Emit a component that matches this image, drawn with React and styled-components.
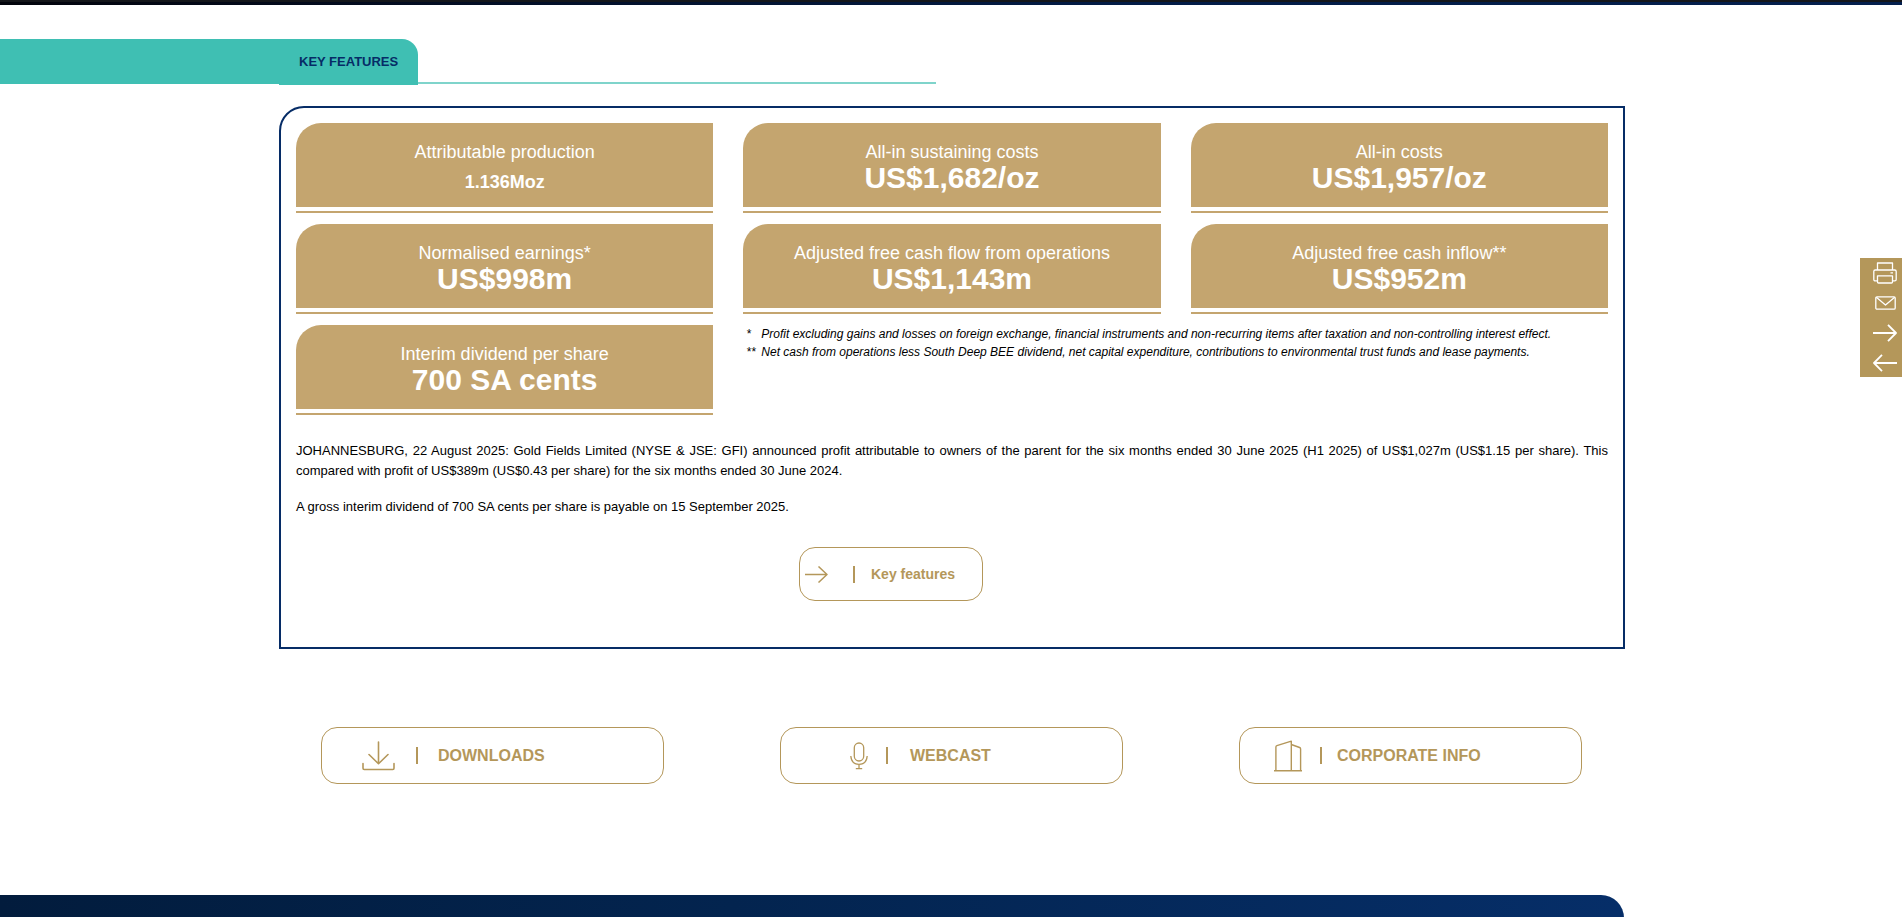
import React from "react";
import styled, { createGlobalStyle } from "styled-components";

const navy = "#062c66";
const gold = "#b4975a";
const tan = "#c4a56f";
const teal = "#3fbfb3";

const GlobalStyle = createGlobalStyle`
  *, *::before, *::after { box-sizing: border-box; }
  body {
    margin: 0;
    background: #fff;
    color: #000;
    font-family: "Liberation Sans", Arial, sans-serif;
    font-size: 14px;
    line-height: 20px;
  }
  h2, p, ul { margin: 0; padding: 0; }
`;

const Page = styled.div`
  display: flex;
  flex-direction: column;
  min-height: 100vh;
`;

const HeroEdge = styled.header`
  height: 5px;
  background: linear-gradient(90deg, #02040c 0%, #03102a 30%, #031c47 60%, #041f4d 100%);
  border-top: 2px solid #14161a;
`;

const HeadingRow = styled.div`
  display: flex;
  height: 46px;
  margin-top: 34px;
`;

const HeadingLead = styled.div`
  flex: none;
  width: calc(50% - 672px);
  height: 45px;
  background: ${teal};
`;

const HeadingTab = styled.h2`
  display: flex;
  align-items: center;
  padding: 0 20px;
  border-radius: 0 16px 0 0;
  background: ${teal};
  color: ${navy};
  font-size: 13px;
  font-weight: 700;
`;

const HeadingRule = styled.div`
  align-self: flex-end;
  width: 518px;
  height: 2px;
  margin-bottom: 1px;
  background: #7fd4cb;
`;

const Content = styled.main`
  width: 1346px;
  max-width: 100%;
  margin-left: calc(50% - 672px);
`;

const Frame = styled.section`
  margin-top: 21px;
  padding: 15px 15px 46px;
  border: 2px solid ${navy};
  border-top-left-radius: 25px;
`;

const TileGrid = styled.div`
  display: grid;
  grid-template-columns: repeat(3, 1fr);
  gap: 11px 30px;
`;

const Tile = styled.div`
  padding-bottom: 4px;
  border-bottom: 2px solid ${tan};
`;

const TileBody = styled.div`
  display: flex;
  flex-direction: column;
  align-items: center;
  height: 84px;
  padding-top: 18px;
  border-top-left-radius: 25px;
  background: ${tan};
  color: #fff;
`;

const TileLabel = styled.span`
  font-size: 18px;
  line-height: 22px;
`;

const TileValue = styled.strong`
  font-size: ${(p) => (p.$small ? 18 : 30)}px;
  line-height: ${(p) => (p.$small ? 38 : 30)}px;
`;

const Notes = styled.ul`
  grid-column: 2 / -1;
  list-style: none;
  font-size: 12px;
  line-height: 18px;
  font-style: italic;
`;

const Note = styled.li`
  display: grid;
  grid-template-columns: 15px 1fr;
  margin-left: 3px;
`;

const Paragraph = styled.p`
  margin-top: ${(p) => (p.$first ? 26 : 16)}px;
  font-size: 13px;
  text-align: justify;
`;

const PillLink = styled.a`
  display: flex;
  align-items: center;
  height: ${(p) => (p.$small ? 54 : 57)}px;
  padding-left: ${(p) => p.$inset}px;
  border: 1px solid ${gold};
  border-radius: 16px;
  color: ${gold};
  font-size: ${(p) => (p.$small ? 14 : 16)}px;
  font-weight: 700;
  text-decoration: none;
`;

const Separator = styled.span`
  width: 2px;
  height: 17px;
  margin: 0 ${(p) => p.$after}px 0 ${(p) => p.$before}px;
  background: ${gold};
`;

const FeatureLinkRow = styled.div`
  width: 184px;
  margin: 30px 0 0 503px;
`;

const QuickLinks = styled.nav`
  display: grid;
  grid-template-columns: repeat(3, 1fr);
  gap: 116px;
  margin-top: 78px;
  padding: 0 43px 0 42px;
`;

const Footer = styled.footer`
  flex: 1;
  min-height: 23px;
  width: calc(50% + 673px);
  margin-top: 111px;
  border-top-right-radius: 30px;
  background: linear-gradient(90deg, #021c3d 0%, #03244f 45%, #062e68 100%);
`;

const SideTools = styled.aside`
  position: fixed;
  top: 258px;
  right: 0;
  display: flex;
  flex-direction: column;
  gap: 1px;
  width: 42px;
  padding: 0 4px 0 12px;
  background: ${gold};
  color: #fff;
`;

const ToolButton = styled.button`
  display: flex;
  align-items: center;
  justify-content: center;
  height: 29px;
  padding: 0;
  border: 0;
  background: none;
  color: inherit;
  cursor: pointer;
`;

const Icon = styled.svg.attrs({ "aria-hidden": true })`
  display: block;
  flex: none;
  fill: none;
  stroke: currentColor;
  stroke-linejoin: round;
`;

const ArrowRight = () => (
  <Icon width="23" height="17" viewBox="0 0 23 17" strokeWidth="1.5">
    <path d="M0 8.5H22M13.5 .5l8.5 8-8.5 8" />
  </Icon>
);

const DownloadIcon = () => (
  <Icon width="33" height="30" viewBox="0 0 33 30" strokeWidth="1.6" strokeLinecap="round">
    <path d="M16.5 1v21.5M7 13.5l9.5 9.2 9.5-9.2M1 22.5v4.8q0 1.2 1.2 1.2h28.6q1.2 0 1.2-1.2v-4.8" />
  </Icon>
);

const MicIcon = () => (
  <Icon width="18" height="28" viewBox="0 0 18 28" strokeWidth="1.3">
    <rect x="4.3" y="1" width="9.4" height="18" rx="4.7" />
    <path d="M.8 14c.4 5.2 3.6 8.3 8.2 8.3s7.8-3.1 8.2-8.3M9 22.3V26.5M5.8 26.7h6.4" />
  </Icon>
);

const BuildingIcon = () => (
  <Icon width="28" height="32" viewBox="0 0 28 32" strokeWidth="1.4">
    <path d="M0 30.8h28M1.9 30.8V7q0-1 1-1.3L17.3 1.2V30.8M17.3 4.5l8.3 3q1 .4 1 1.4v21.9" />
  </Icon>
);

const PrinterIcon = () => (
  <Icon width="24" height="22" viewBox="0 0 24 22" strokeWidth="1.3">
    <path d="M4.5 8V1h15v7M4.5 18.8H2.2Q.8 18.8.8 17.4V9.4Q.8 8 2.2 8h19.6q1.4 0 1.4 1.4v8q0 1.4-1.4 1.4h-2.3" />
    <path d="M4.5 13.8h15V20q0 1-1 1h-13q-1 0-1-1zM17.5 10.8h2.5" />
  </Icon>
);

const MailIcon = () => (
  <Icon width="21" height="14" viewBox="0 0 21 14" strokeWidth="1.3">
    <rect x=".8" y=".8" width="19.4" height="12.4" rx="1.2" />
    <path d="M1.3 1.3l9.2 7.7 9.2-7.7" />
  </Icon>
);

const ToolArrow = ({ back }) => (
  <Icon width="24" height="18" viewBox="0 0 24 18" strokeWidth="1.8">
    <path d={back ? "M24 9H1M9 .8L1 9l8 8.2" : "M0 9h23M15 .8L23 9l-8 8.2"} />
  </Icon>
);

const tiles = [
  { label: "Attributable production", value: "1.136Moz", small: true },
  { label: "All-in sustaining costs", value: "US$1,682/oz" },
  { label: "All-in costs", value: "US$1,957/oz" },
  { label: "Normalised earnings*", value: "US$998m" },
  { label: "Adjusted free cash flow from operations", value: "US$1,143m" },
  { label: "Adjusted free cash inflow**", value: "US$952m" },
  { label: "Interim dividend per share", value: "700 SA cents" },
];

const notes = [
  ["*", "Profit excluding gains and losses on foreign exchange, financial instruments and non-recurring items after taxation and non-controlling interest effect."],
  ["**", "Net cash from operations less South Deep BEE dividend, net capital expenditure, contributions to environmental trust funds and lease payments."],
];

const links = [
  { text: "DOWNLOADS", icon: <DownloadIcon />, inset: 40, before: 21, after: 20 },
  { text: "WEBCAST", icon: <MicIcon />, inset: 69, before: 18, after: 22 },
  { text: "CORPORATE INFO", icon: <BuildingIcon />, inset: 34, before: 18, after: 15 },
];

const tools = [
  { name: "Print", icon: <PrinterIcon /> },
  { name: "Email", icon: <MailIcon /> },
  { name: "Next page", icon: <ToolArrow /> },
  { name: "Previous page", icon: <ToolArrow back /> },
];

export default function App() {
  return (
    <Page>
      <GlobalStyle />
      <HeroEdge />
      <HeadingRow>
        <HeadingLead />
        <HeadingTab>KEY FEATURES</HeadingTab>
        <HeadingRule />
      </HeadingRow>
      <Content>
        <Frame>
          <TileGrid>
            {tiles.map((t) => (
              <Tile key={t.label}>
                <TileBody>
                  <TileLabel>{t.label}</TileLabel>
                  <TileValue $small={t.small}>{t.value}</TileValue>
                </TileBody>
              </Tile>
            ))}
            <Notes>
              {notes.map(([mark, text]) => (
                <Note key={mark}>
                  <span>{mark}</span>
                  <span>{text}</span>
                </Note>
              ))}
            </Notes>
          </TileGrid>
          <Paragraph $first>
            JOHANNESBURG, 22 August 2025: Gold Fields Limited (NYSE &amp; JSE: GFI) announced profit
            attributable to owners of the parent for the six months ended 30 June 2025 (H1 2025) of
            US$1,027m (US$1.15 per share). This compared with profit of US$389m (US$0.43 per share)
            for the six months ended 30 June 2024.
          </Paragraph>
          <Paragraph>
            A gross interim dividend of 700 SA cents per share is payable on 15 September 2025.
          </Paragraph>
          <FeatureLinkRow>
            <PillLink href="#key-features" $small $inset={5}>
              <ArrowRight />
              <Separator $before={25} $after={16} />
              Key features
            </PillLink>
          </FeatureLinkRow>
        </Frame>
        <QuickLinks>
          {links.map((l) => (
            <PillLink key={l.text} href="#" $inset={l.inset}>
              {l.icon}
              <Separator $before={l.before} $after={l.after} />
              {l.text}
            </PillLink>
          ))}
        </QuickLinks>
      </Content>
      <Footer />
      <SideTools>
        {tools.map((t) => (
          <ToolButton key={t.name} type="button" aria-label={t.name}>
            {t.icon}
          </ToolButton>
        ))}
      </SideTools>
    </Page>
  );
}
